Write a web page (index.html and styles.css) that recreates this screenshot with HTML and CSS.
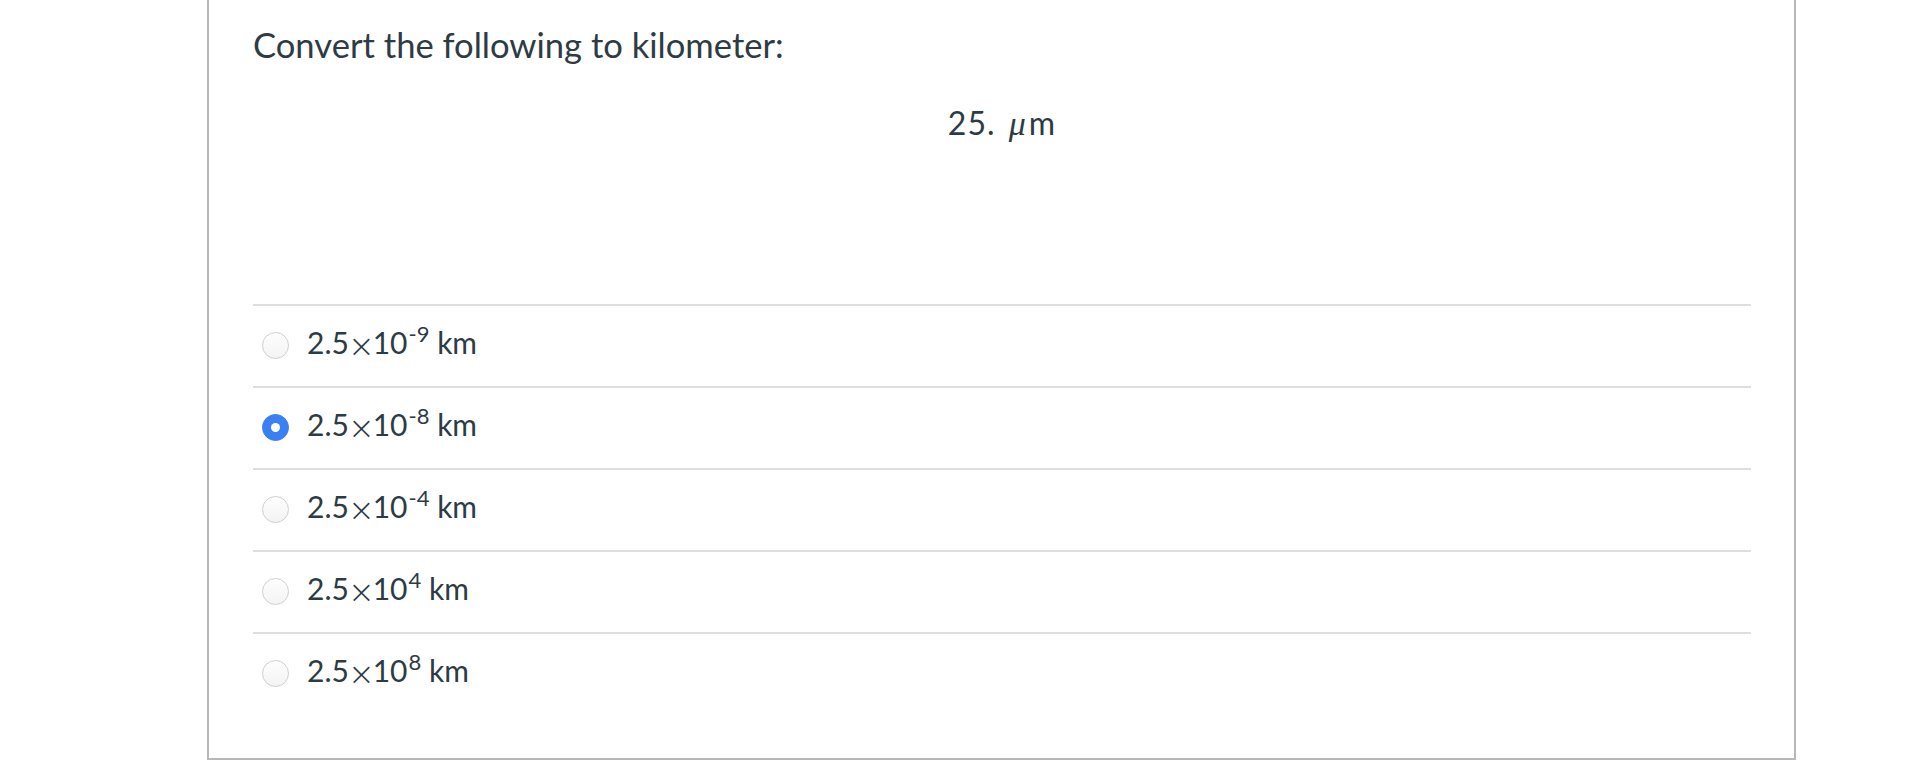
FILE: index.html
```html
<!DOCTYPE html>
<html>
<head>
<meta charset="utf-8">
<link rel="stylesheet" href="styles.css">
</head>
<body>
<div class="card">
  <p class="question">Convert the following to kilometer:</p>
  <p class="equation">25. <span class="mu">μ</span>m</p>
  <div class="answers">
    <label class="answer"><span class="radio"></span><span class="text">2.5<span class="times">×</span>10<sup>-9</sup> km</span></label>
    <label class="answer"><span class="radio checked"></span><span class="text">2.5<span class="times">×</span>10<sup>-8</sup> km</span></label>
    <label class="answer"><span class="radio"></span><span class="text">2.5<span class="times">×</span>10<sup>-4</sup> km</span></label>
    <label class="answer"><span class="radio"></span><span class="text">2.5<span class="times">×</span>10<sup>4</sup> km</span></label>
    <label class="answer"><span class="radio"></span><span class="text">2.5<span class="times">×</span>10<sup>8</sup> km</span></label>
  </div>
</div>
</body>
</html>
```

FILE: styles.css
```css
html, body {
  margin: 0;
  padding: 0;
  background: #ffffff;
}
body {
  font-family: Lato, "Noto Sans", sans-serif;
  color: #2d3b45;
}
.card {
  margin-left: 207px;
  width: 1589px;
  box-sizing: border-box;
  border: 2px solid #b8b8b8;
  border-top: none;
  padding: 0 43px 44px 44px;
}
.question {
  margin: 0;
  padding-top: 22px;
  font-size: 34.6px;
  line-height: 46px;
}
.equation {
  margin: 0;
  padding-top: 33px;
  text-align: center;
  font-size: 32px;
  line-height: 44px;
  height: 203px;
  letter-spacing: 1px;
}
.mu {
  font-family: "Liberation Serif", serif;
  font-style: italic;
  font-size: 34px;
  margin-left: 4px;
  margin-right: 2px;
}
.answers {
  display: flex;
  flex-direction: column;
}
.answer {
  display: flex;
  align-items: center;
  height: 80px;
  border-top: 2px solid #dedede;
}
.radio {
  width: 25px;
  height: 25px;
  border: 1px solid #cfcfcf;
  border-radius: 50%;
  background: linear-gradient(#fefefe, #f3f3f3);
  margin-left: 9px;
  margin-right: 18px;
  flex: none;
  position: relative;
  top: -1px;
}
.radio.checked {
  background: #3b7ff5;
  border-color: #3b7ff5;
}
.radio.checked::after {
  content: "";
  position: absolute;
  left: 8px;
  top: 8px;
  width: 9px;
  height: 9px;
  border-radius: 50%;
  background: #ffffff;
}
.text {
  font-size: 30px;
  line-height: 36px;
  position: relative;
  top: -4px;
}
.times {
  font-family: "DejaVu Sans", sans-serif;
  font-weight: 200;
  font-size: 32px;
  line-height: 0;
  position: relative;
  top: 3px;
  margin: 0 -2px 0 -1px;
}
.text sup {
  font-size: 22px;
  line-height: 0;
  vertical-align: 0;
  position: relative;
  top: -12px;
  margin-left: 1px;
}
```
